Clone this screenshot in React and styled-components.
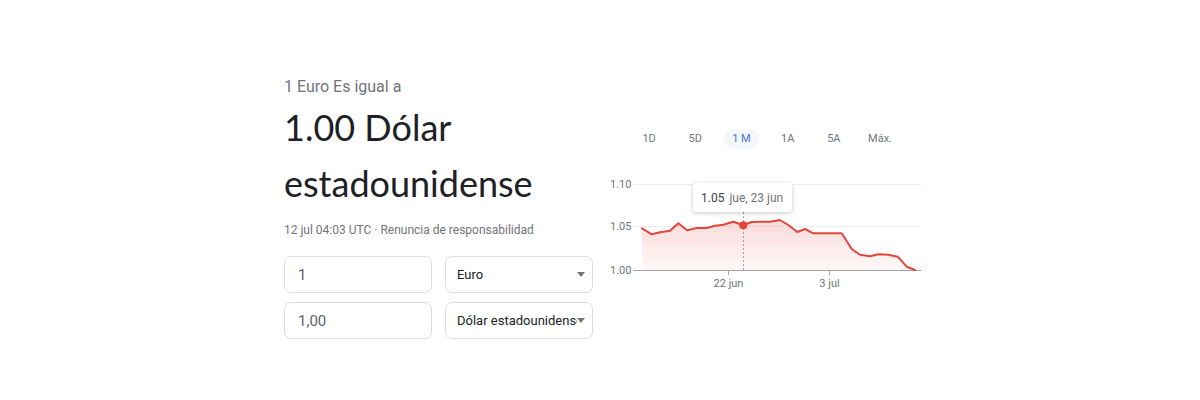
import React from "react";
import styled, { createGlobalStyle } from "styled-components";

const Global = createGlobalStyle`
  html, body { margin: 0; padding: 0; background: #fff; }
  body { font-family: Roboto, "Liberation Sans", Arial, sans-serif; }
`;

const Page = styled.div`
  display: flex;
  gap: 12px;
  padding: 75px 0 0 284px;
  height: 400px;
  box-sizing: border-box;
`;

const Left = styled.div`
  width: 309px;
  display: flex;
  flex-direction: column;
`;

const Subtitle = styled.div`
  font-size: 16px;
  line-height: 24px;
  color: #70757a;
`;

const Headline = styled.div`
  font-family: Lato, "Open Sans", sans-serif;
  font-size: 36px;
  line-height: 56px;
  color: #202124;
`;

const Meta = styled.div`
  margin-top: 11px;
  font-size: 12px;
  line-height: 16px;
  color: #70757a;
`;

const Grid = styled.div`
  margin-top: 18px;
  display: grid;
  grid-template-columns: 148px 148px;
  column-gap: 13px;
  row-gap: 9px;
`;

const Field = styled.div`
  height: 37px;
  box-sizing: border-box;
  border: 1px solid #dadce0;
  border-radius: 7px;
  display: flex;
  align-items: center;
`;

const InputBox = styled(Field)`
  padding-left: 13px;
  font-size: 15px;
  color: #5f6368;
`;

const SelectBox = styled(Field)`
  padding: 0 7px 0 11px;
  font-size: 13px;
  color: #202124;
`;

const SelectLabel = styled.span`
  flex: 1;
  min-width: 0;
  overflow: hidden;
  white-space: nowrap;
`;

const Caret = styled.span`
  flex: none;
  width: 0;
  height: 0;
  border-left: 4.5px solid transparent;
  border-right: 4.5px solid transparent;
  border-top: 5px solid #70757a;
`;

const Right = styled.div`
  width: 320px;
  display: flex;
  flex-direction: column;
`;

const Ranges = styled.div`
  margin-top: 54px;
  padding-left: 21px;
  display: flex;
`;

const Range = styled.div`
  width: 46.2px;
  display: flex;
  justify-content: center;
`;

const RangeLabel = styled.span`
  height: 20px;
  line-height: 20px;
  padding: 0 8px;
  border-radius: 10px;
  font-size: 11px;
  white-space: nowrap;
  color: ${(p) => (p.$active ? "#4a72c4" : "#70757a")};
  background: ${(p) => (p.$active ? "#f4f6fa" : "transparent")};
`;

const ChartWrap = styled.div`
  position: relative;
  margin-top: 26px;
  width: 320px;
  height: 120px;
`;

const Tooltip = styled.div`
  position: absolute;
  left: 88px;
  top: 8px;
  height: 29px;
  box-sizing: border-box;
  padding: 0 9px 0 8px;
  display: flex;
  align-items: center;
  gap: 5px;
  background: #fff;
  border-radius: 3px;
  box-shadow: 0 1px 4px rgba(0, 0, 0, 0.22);
  font-size: 12px;
  white-space: nowrap;
`;

const TipValue = styled.span`
  color: #3c4043;
`;

const TipDate = styled.span`
  color: #70757a;
`;

const AxisText = styled.text`
  font-family: Roboto, "Liberation Sans", Arial, sans-serif;
  font-size: 11px;
  fill: #70757a;
`;

const points = [
  [37, 53.3], [46.7, 59.3], [55, 57.3], [65, 55.7], [73.3, 48.3], [82.3, 55.3],
  [91.7, 53], [101.7, 53], [110, 50.7], [118.3, 49.7], [128.3, 46.7], [138.3, 50.3],
  [146.7, 47], [155, 46.7], [165, 46.7], [175, 45], [183.3, 50], [192.3, 57],
  [200, 54], [208.3, 58.3], [218.3, 58.3], [236.7, 58.3], [246.7, 74], [255, 79.7],
  [265, 81.3], [273.3, 79.3], [283.3, 79.7], [292.7, 81.7], [301.7, 91.7], [310, 95],
];

const linePath = points.map((p, i) => `${i ? "L" : "M"}${p[0]},${p[1]}`).join(" ");
const areaPath = `${linePath} L310,95 L37,95 Z`;

const ranges = ["1D", "5D", "1 M", "1A", "5A", "Máx."];

function Chart() {
  return (
    <ChartWrap>
      <svg width="320" height="120" viewBox="0 0 320 120">
        <defs>
          <linearGradient id="fillGrad" x1="0" y1="0" x2="0" y2="1">
            <stop offset="0" stopColor="#e34a40" stopOpacity="0.2" />
            <stop offset="1" stopColor="#e34a40" stopOpacity="0.04" />
          </linearGradient>
        </defs>
        <line x1="28" y1="9.5" x2="316" y2="9.5" stroke="#eeeeee" strokeWidth="1" />
        <line x1="28" y1="51.5" x2="316" y2="51.5" stroke="#eeeeee" strokeWidth="1" />
        <AxisText x="5" y="13">1.10</AxisText>
        <AxisText x="5" y="55">1.05</AxisText>
        <AxisText x="5" y="99">1.00</AxisText>
        <path d={areaPath} fill="url(#fillGrad)" />
        <line x1="138.5" y1="37" x2="138.5" y2="95" stroke="#9aa0a6" strokeWidth="1" strokeDasharray="2,2" />
        <line x1="28" y1="95.5" x2="316" y2="95.5" stroke="#a6a6a6" strokeWidth="1" />
        <line x1="123.5" y1="95" x2="123.5" y2="100" stroke="#a6a6a6" strokeWidth="1" />
        <line x1="224.5" y1="95" x2="224.5" y2="100" stroke="#a6a6a6" strokeWidth="1" />
        <AxisText x="123.5" y="112" textAnchor="middle">22 jun</AxisText>
        <AxisText x="224.5" y="112" textAnchor="middle">3 jul</AxisText>
        <path d={linePath} fill="none" stroke="#e0463c" strokeWidth="2" strokeLinejoin="round" strokeLinecap="round" />
        <circle cx="138.3" cy="50.3" r="4" fill="#e0463c" />
      </svg>
      <Tooltip>
        <TipValue>1.05</TipValue>
        <TipDate>jue, 23 jun</TipDate>
      </Tooltip>
    </ChartWrap>
  );
}

export default function App() {
  return (
    <>
      <Global />
      <Page>
        <Left>
          <Subtitle>1 Euro Es igual a</Subtitle>
          <Headline>
            1.00 Dólar
            <br />
            estadounidense
          </Headline>
          <Meta>12 jul 04:03 UTC · Renuncia de responsabilidad</Meta>
          <Grid>
            <InputBox>1</InputBox>
            <SelectBox>
              <SelectLabel>Euro</SelectLabel>
              <Caret />
            </SelectBox>
            <InputBox>1,00</InputBox>
            <SelectBox>
              <SelectLabel>Dólar estadounidense</SelectLabel>
              <Caret />
            </SelectBox>
          </Grid>
        </Left>
        <Right>
          <Ranges>
            {ranges.map((r) => (
              <Range key={r}>
                <RangeLabel $active={r === "1 M"}>{r}</RangeLabel>
              </Range>
            ))}
          </Ranges>
          <Chart />
        </Right>
      </Page>
    </>
  );
}
